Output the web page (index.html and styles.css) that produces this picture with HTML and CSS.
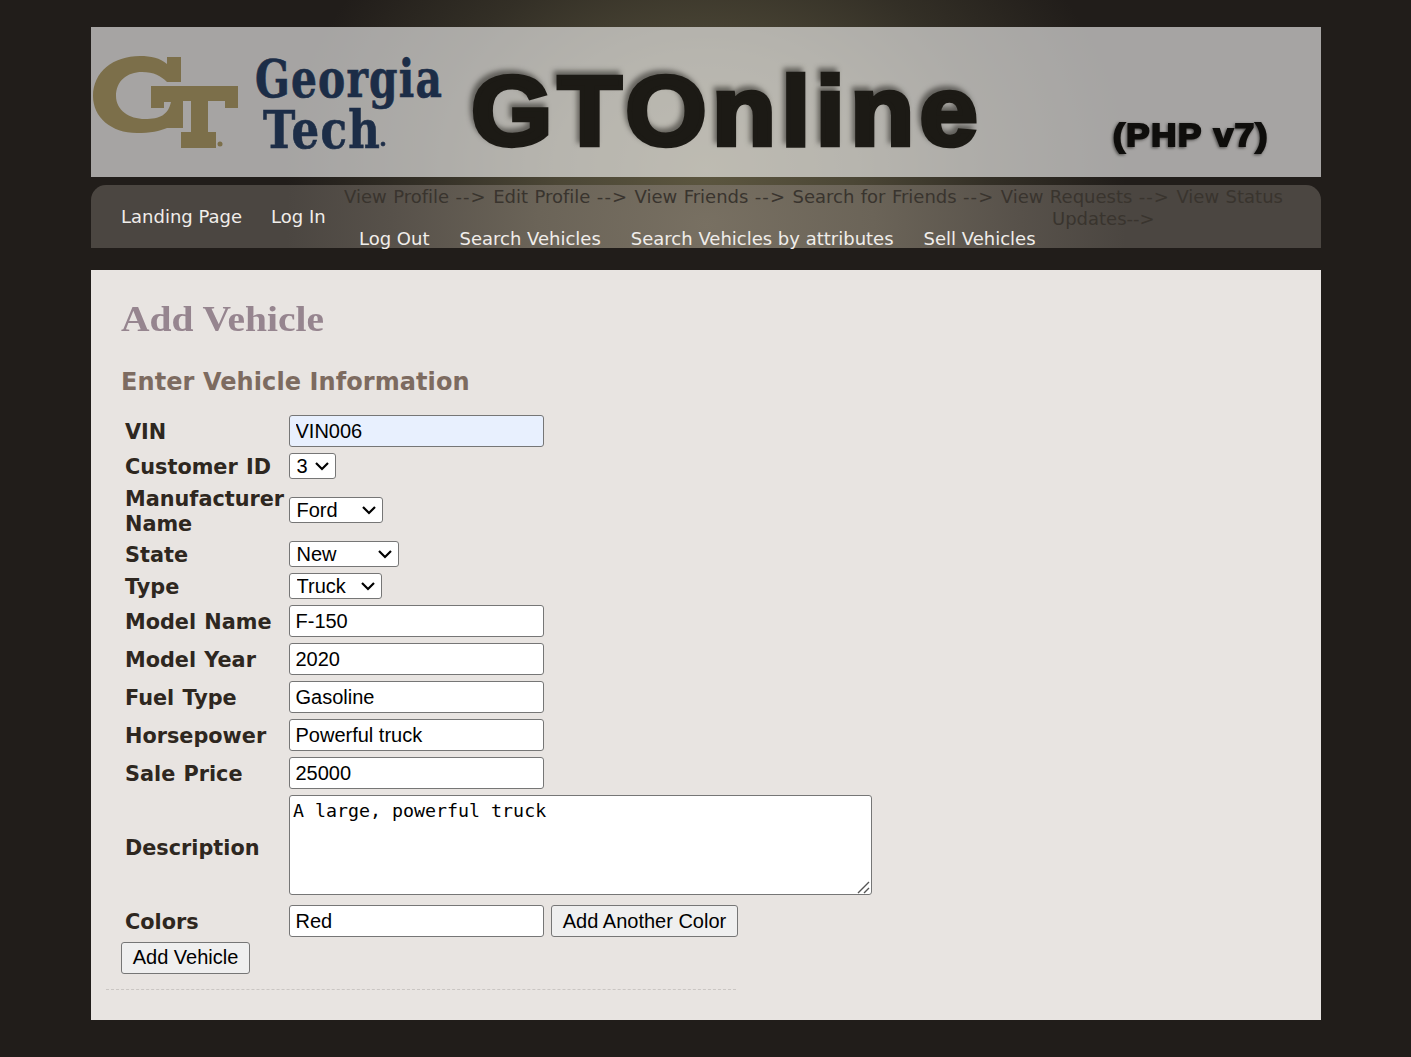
FILE: index.html
```html
<!DOCTYPE html>
<html lang="en">
<head>
<meta charset="utf-8">
<title>GTOnline Add Vehicle</title>
<link rel="stylesheet" href="styles.css">
</head>
<body>
<div class="page">
  <header class="banner">
    <svg class="logo" width="1230" height="150" viewBox="0 0 1230 150" role="img" aria-label="Georgia Tech GTOnline">
      <g class="gold">
        <path d="M76 37C69 31 60 29 49 29C22 29 2 45 2 69C2 90 20 106 46 106C59 106 69 104 76 101H92V74H100V105H90V121H125V105H117V74H134V81H147V59H60V81H73V75H80C77 88 69 92 54 92C38 92 25 83 25 69C25 54 36 45 51 45C63 45 70 49 76 55H90V30H76Z"/>
        <circle cx="129" cy="117" r="2.5"/>
      </g>
      <g class="navy" font-size="53">
        <text x="164" y="69.5" textLength="188" lengthAdjust="spacingAndGlyphs">Georgia</text>
        <text x="172" y="120.5" textLength="118" lengthAdjust="spacingAndGlyphs">Tech</text>
        <circle cx="292" cy="117" r="2"/>
      </g>
      <text class="title" font-size="98" x="380" y="118" textLength="512" lengthAdjust="spacingAndGlyphs">GTOnline</text>
      <text class="version" font-size="32" x="1022" y="119" textLength="156" lengthAdjust="spacingAndGlyphs">(PHP v7)</text>
    </svg>
  </header>
  <nav class="menu">
    <div class="menu-start"><a>Landing Page</a><a>Log In</a></div>
    <div class="menu-main">
      <div class="trail">View Profile <i>--&gt;</i> Edit Profile <i>--&gt;</i> View Friends <i>--&gt;</i> Search for Friends <i>--&gt;</i> View Requests <i>--&gt;</i> View Status</div>
      <div class="trail trail-end">Updates--&gt;</div>
      <div class="menu-links"><a>Log Out</a><a>Search Vehicles</a><a>Search Vehicles by attributes</a><a>Sell Vehicles</a></div>
    </div>
  </nav>
  <main class="content">
    <h1><span>Add Vehicle</span></h1>
    <h2>Enter Vehicle Information</h2>
    <form>
      <div class="fields">
        <label>VIN</label><input class="filled" value="VIN006">
        <label>Customer ID</label><div class="pick pick-id"><select><option>3</option></select><svg viewBox="0 0 14 9"><path d="M1 1L7 7L13 1"/></svg></div>
        <label>Manufacturer Name</label><div class="pick pick-maker"><select><option>Ford</option></select><svg viewBox="0 0 14 9"><path d="M1 1L7 7L13 1"/></svg></div>
        <label>State</label><div class="pick pick-state"><select><option>New</option></select><svg viewBox="0 0 14 9"><path d="M1 1L7 7L13 1"/></svg></div>
        <label>Type</label><div class="pick pick-type"><select><option>Truck</option></select><svg viewBox="0 0 14 9"><path d="M1 1L7 7L13 1"/></svg></div>
        <label>Model Name</label><input value="F-150">
        <label>Model Year</label><input value="2020">
        <label>Fuel Type</label><input value="Gasoline">
        <label>Horsepower</label><input value="Powerful truck">
        <label>Sale Price</label><input value="25000">
        <label>Description</label>
        <div class="area"><textarea spellcheck="false">A large, powerful truck</textarea><svg viewBox="0 0 13 13"><path d="M1 12L12 1M7 12L12 7"/></svg></div>
        <label>Colors</label><div class="colors"><input value="Red"><button type="button" class="add-color">Add Another Color</button></div>
      </div>
      <button type="button" class="submit">Add Vehicle</button>
    </form>
    <div class="rule"></div>
  </main>
</div>
</body>
</html>
```
FILE: styles.css
```css
* { box-sizing: border-box; }
body {
  margin: 0;
  min-height: 1057px;
  background: radial-gradient(ellipse 420px 330px at 706px 170px, #5c563f, #4c4736 35%, #332f26 68%, #211d1a) 0 0 / 100% 248px no-repeat #211d1a;
  font-family: Verdana, "DejaVu Sans", sans-serif;
  font-variant-ligatures: none;
  color: #2e2720;
}
.page { width: 1230px; margin: 0 auto 0 91px; padding-top: 27px; }
.banner { height: 150px; background: rgba(255, 255, 255, .6); }
.logo { display: block; }
.gold { fill: #7c6f4a; }
.navy { fill: #1c2d47; stroke: #1c2d47; stroke-width: .7; font-family: "DejaVu Serif", serif; font-weight: bold; letter-spacing: 1.5px; }
.title, .version { font-family: "Liberation Sans", Arial, sans-serif; font-weight: bold; }
.title { fill: #1c1a15; stroke: #1c1a15; stroke-width: 4.5; letter-spacing: 5px; filter: drop-shadow(-3px -4px 2.5px rgba(20, 18, 14, .5)); }
.version { fill: #0f0e0c; stroke: #0f0e0c; stroke-width: 2; letter-spacing: 1.5px; filter: drop-shadow(-1px 1px 1.5px rgba(15, 14, 12, .6)); }
.menu {
  display: flex;
  height: 63px;
  margin-top: 8px;
  border-radius: 15px 15px 0 0;
  background: radial-gradient(ellipse 420px 300px at 615px 40px, #787062, #6b6458 40%, #57514a 75%, #4b4641);
  font-size: 18px;
  line-height: 22px;
  white-space: nowrap;
}
.menu a { color: #f0edea; }
.menu-start { display: flex; gap: 29px; width: 253px; padding: 21px 0 0 30px; }
.menu-main { width: 948px; padding-top: 1px; }
.trail { color: #39342e; word-spacing: .7px; }
.trail i { font-style: normal; letter-spacing: 1.05px; }
.trail-end { padding-left: 708px; }
.menu-links { display: flex; gap: 30px; margin-top: -2px; padding-left: 15px; }
.content { height: 750px; margin-top: 22px; padding: 28px 15px 0; background: #e8e4e1; }
h1, h2 { margin: 0 15px; }
h1 { font: bold 36px/42px "Liberation Serif", serif; color: #96858f; }
h1 span { display: inline-block; transform: scaleX(1.097); transform-origin: left; }
h2 { margin-top: 27px; font-size: 24px; line-height: 30px; letter-spacing: .08px; color: #7d6b60; }
form { padding: 18px 15px 0; }
.fields {
  display: grid;
  grid-template-columns: 158px auto;
  grid-template-rows: 32px 26px 50px 26px 26px 32px 32px 32px 32px 32px 104px 32px;
  gap: 6px;
  margin-left: 4px;
  align-items: center;
}
label { position: relative; top: 1px; font-size: 20.8px; font-weight: bold; line-height: 25px; padding-top: 1px; word-spacing: 1px; }
input, select, textarea, button {
  margin: 0;
  font: 20px/24px Arial, "Liberation Sans", sans-serif;
  border: 1px solid #767676;
  border-radius: 3px;
  background: #fff;
  color: #000;
}
input { width: 255px; height: 32px; padding: 0 5.5px; }
.filled { background: #e8f0fe; }
.pick { position: relative; height: 26px; }
.pick select { appearance: none; width: 100%; height: 26px; padding: 0 6.5px; display: block; }
.pick svg { position: absolute; right: 7px; top: 9px; width: 14px; height: 9px; }
.pick path { fill: none; stroke: #000; stroke-width: 2.2; }
.pick-id { width: 47px; }
.pick-maker { width: 94px; }
.pick-state { width: 110px; }
.pick-type { width: 93px; }
.area { position: relative; align-self: start; width: 583px; height: 100px; }
textarea { display: block; width: 583px; height: 100px; padding: 3px; resize: none; font: 18.3px/24px "DejaVu Sans Mono", monospace; }
.area svg { position: absolute; right: 2px; bottom: 1px; width: 13px; height: 13px; }
.area path { fill: none; stroke: #555; stroke-width: 1.4; }
.colors { display: flex; gap: 7px; }
button { height: 32px; padding: 0; background: #efefef; }
.add-color { width: 187px; }
.submit { display: block; width: 129px; margin-top: 5px; padding-bottom: 2px; }
.rule { width: 630px; margin-top: 15px; border-top: 1px dashed #cac6c3; }
```
